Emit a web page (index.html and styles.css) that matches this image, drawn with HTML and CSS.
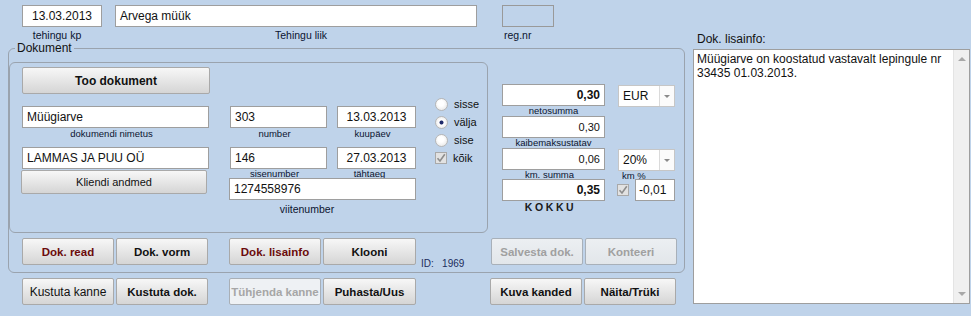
FILE: index.html
```html
<!DOCTYPE html>
<html lang="et">

<head>
    <meta charset="UTF-8">
    <meta name="viewport" content="width=device-width, initial-scale=1.0">
    <title>Dokument</title>
    <link rel="stylesheet" href="styles.css">
</head>

<body>
    <div class="screen">
        <div class="main">
            <div class="top-row">
                <div class="field w-date">
                    <div class="input center">13.03.2013</div>
                    <div class="cap cap-top pr10">tehingu kp</div>
                </div>
                <div class="field w-type">
                    <div class="input">Arvega müük</div>
                    <div class="cap cap-top pl10">Tehingu liik</div>
                </div>
                <div class="field w-reg">
                    <div class="input blank"></div>
                    <div class="cap cap-top left">reg.nr</div>
                </div>
            </div>

            <fieldset class="doc">
                <legend>Dokument</legend>
                <div class="doc-body">
                    <div class="panel">
                        <button class="btn btn-fetch">Too dokument</button>
                        <div class="fields">
                            <div class="col-name">
                                <div class="input">Müügiarve</div>
                                <div class="cap gap">dokumendi nimetus</div>
                                <div class="input">LAMMAS JA PUU OÜ</div>
                                <button class="btn btn-client">Kliendi andmed</button>
                            </div>
                            <div class="col-nums">
                                <div class="pair">
                                    <div class="field w-nr">
                                        <div class="input">303</div>
                                        <div class="cap gap">number</div>
                                    </div>
                                    <div class="field w-dt">
                                        <div class="input center">13.03.2013</div>
                                        <div class="cap gap">kuupäev</div>
                                    </div>
                                </div>
                                <div class="pair">
                                    <div class="field w-nr">
                                        <div class="input">146</div>
                                        <div class="cap tight">sisenumber</div>
                                    </div>
                                    <div class="field w-dt">
                                        <div class="input center">27.03.2013</div>
                                        <div class="cap tight pr14">tähtaeg</div>
                                    </div>
                                </div>
                                <div class="input ref">1274558976</div>
                                <div class="cap ref-cap">viitenumber</div>
                            </div>
                            <div class="radios">
                                <div class="opt"><span class="dot"></span>sisse</div>
                                <div class="opt"><span class="dot on"></span>välja</div>
                                <div class="opt"><span class="dot"></span>sise</div>
                                <div class="opt">
                                    <span class="check"><svg width="10" height="10" viewBox="0 0 10 10"><path d="M1.5 5.2 L4 8 L8.8 1.2" fill="none" stroke="#8d8d8d" stroke-width="1.6"/></svg></span>kõik
                                </div>
                            </div>
                        </div>
                    </div>

                    <div class="sums">
                        <div class="sum-col">
                            <div class="input num bold">0,30</div>
                            <div class="cap sm">netosumma</div>
                            <div class="input num small">0,30</div>
                            <div class="cap sm">kaibemaksustatav</div>
                            <div class="input num small">0,06</div>
                            <div class="cap tight">km. summa</div>
                            <div class="input num bold">0,35</div>
                            <div class="cap total">KOKKU</div>
                        </div>
                        <div class="rate-col">
                            <div class="combo first">
                                <span class="combo-val">EUR</span>
                                <span class="combo-btn"><i class="tri"></i></span>
                            </div>
                            <div class="combo second">
                                <span class="combo-val">20%</span>
                                <span class="combo-btn"><i class="tri"></i></span>
                            </div>
                            <div class="cap tight left km">km %</div>
                            <div class="round-row">
                                <span class="check"><svg width="10" height="10" viewBox="0 0 10 10"><path d="M1.5 5.2 L4 8 L8.8 1.2" fill="none" stroke="#8d8d8d" stroke-width="1.6"/></svg></span>
                                <div class="input diff">-0,01</div>
                            </div>
                        </div>
                    </div>
                </div>

                <div class="btn-row inner-row">
                    <button class="btn red">Dok. read</button>
                    <button class="btn">Dok. vorm</button>
                    <button class="btn red push">Dok. lisainfo</button>
                    <button class="btn wide">Klooni</button>
                    <div class="doc-id">ID:&nbsp;&nbsp; 1969</div>
                    <button class="btn off right">Salvesta dok.</button>
                    <button class="btn off">Konteeri</button>
                </div>
            </fieldset>

            <div class="btn-row outer-row">
                <button class="btn plain">Kustuta kanne</button>
                <button class="btn">Kustuta dok.</button>
                <button class="btn faded push">Tühjenda kanne</button>
                <button class="btn wide">Puhasta/Uus</button>
                <button class="btn far">Kuva kanded</button>
                <button class="btn">Näita/Trüki</button>
            </div>
        </div>

        <div class="side">
            <div class="side-label">Dok. lisainfo:</div>
            <div class="memo">
                <div class="memo-text">Müügiarve on koostatud vastavalt lepingule nr<br>33435 01.03.2013.</div>
                <div class="memo-bar">
                    <i class="arrow up"></i>
                    <i class="arrow down"></i>
                </div>
            </div>
        </div>
    </div>
</body>

</html>
```

FILE: styles.css
```css
* {
    box-sizing: border-box;
}

body {
    margin: 0;
    background-color: #bfd3ea;
    font-family: "Liberation Sans", Arial, sans-serif;
    color: #111;
    overflow: hidden;
}

.screen {
    display: flex;
    gap: 8px;
    width: 971px;
    height: 316px;
}

.main {
    width: 685px;
    flex: none;
}

/* top line: date, type, reg.nr */
.top-row {
    display: flex;
    height: 41px;
    padding: 5px 0 0 22px;
}

.field {
    display: flex;
    flex-direction: column;
}

.w-date {
    width: 80px;
}

.w-type {
    width: 362px;
    margin-left: 13px;
}

.w-reg {
    width: 52px;
    margin-left: 25px;
}

.input {
    height: 22px;
    border: 1px solid #9e9e9e;
    background-color: #fff;
    font-size: 12px;
    line-height: 20px;
    padding: 0 4px;
    white-space: nowrap;
    overflow: hidden;
}

.input.center {
    text-align: center;
}

.input.blank {
    background-color: transparent;
    border-color: #999;
}

.input.num {
    text-align: right;
    padding-right: 4px;
}

.input.bold {
    font-weight: bold;
}

.input.small {
    font-size: 11px;
}

.cap {
    font-size: 9.5px;
    line-height: 12px;
    text-align: center;
    color: #0b1430;
    white-space: nowrap;
    padding-right: 8px;
}

.cap-top {
    font-size: 10.5px;
    margin-top: 2px;
    padding-right: 0;
}

.cap.left {
    text-align: left;
    padding: 0 0 0 2px;
}

.cap.pr10 {
    padding-right: 10px;
}

.cap.pl10 {
    padding-left: 10px;
}

.cap.pr14 {
    padding-right: 14px;
}

.cap.gap {
    margin-bottom: 7px;
}

.cap.tight {
    line-height: 9px;
    height: 9px;
}

/* Dokument group */
.doc {
    margin: 0 0 0 8px;
    width: 677px;
    min-width: 0;
    padding: 0 0 7px;
    border: 1px solid #9aa3ae;
    border-radius: 6px;
}

.doc legend {
    margin-left: 6px;
    padding: 0 2px;
    font-size: 12px;
    line-height: 14px;
    color: #111;
}

.doc-body {
    display: flex;
    align-items: flex-start;
    margin-top: 7px;
}

.panel {
    width: 479px;
    height: 171px;
    flex: none;
    border: 1px solid #9aa3ae;
    border-radius: 6px;
    padding: 4px 0 0 12px;
}

.btn {
    height: 27px;
    width: 92px;
    padding: 0;
    border: 1px solid #a9a9a9;
    border-radius: 2px;
    background: linear-gradient(#f7f7f7, #d5d5d5);
    font-family: inherit;
    font-size: 11.5px;
    font-weight: bold;
    color: #111;
    white-space: nowrap;
    cursor: pointer;
}

.btn-fetch {
    width: 188px;
    display: block;
    font-size: 12px;
}

.fields {
    display: flex;
    margin-top: 1px;
}

.col-name {
    width: 187px;
    margin-top: 11px;
    display: flex;
    flex-direction: column;
}

.btn-client {
    width: 186px;
    height: 24px;
    margin: 1px 0 0 -1px;
    font-size: 11px;
    font-weight: normal;
}

.col-nums {
    width: 186px;
    margin: 11px 0 0 21px;
    display: flex;
    flex-direction: column;
}

.pair {
    display: flex;
    gap: 10px;
}

.w-nr {
    width: 97px;
}

.w-dt {
    width: 79px;
}

.input.ref {
    width: 187px;
    margin-left: -1px;
}

.ref-cap {
    margin-top: 3px;
    font-size: 10.5px;
    padding-right: 32px;
}

/* sisse / välja / sise / kõik */
.radios {
    margin-left: 17px;
    display: flex;
    flex-direction: column;
}

.opt {
    height: 18px;
    display: flex;
    align-items: center;
    gap: 6px;
    padding-left: 2px;
    font-size: 11px;
}

.dot {
    width: 13px;
    height: 13px;
    border-radius: 50%;
    border: 1px solid #b6b6b6;
    background: radial-gradient(circle at 45% 40%, #fff 30%, #e0e0e0);
}

.dot.on {
    background: radial-gradient(circle, #1f2b6b 0 1.6px, #fff 2.4px, #fff 35%, #e0e0e0);
}

.check {
    width: 12px;
    height: 12px;
    border: 1px solid #a9a9a9;
    background-color: #e2e2e2;
    display: flex;
    align-items: center;
    justify-content: center;
}

/* money fields */
.sums {
    display: flex;
    gap: 12px;
    margin: 22px 0 0 14px;
}

.sum-col {
    width: 103px;
    display: flex;
    flex-direction: column;
}

.cap.sm {
    line-height: 10px;
    padding-right: 0;
}

.cap.total {
    font-size: 10.5px;
    font-weight: bold;
    letter-spacing: 2.6px;
    padding-right: 6px;
    color: #1a1a1a;
}

.rate-col {
    width: 58px;
    display: flex;
    flex-direction: column;
}

.combo {
    display: flex;
    width: 57px;
    height: 22px;
    margin-left: 1px;
    border: 1px solid #c6c6c6;
    background-color: #fff;
}

.combo.first {
    margin-top: 1px;
}

.combo.second {
    margin-top: 42px;
}

.combo-val {
    flex: 1;
    padding-left: 4px;
    font-size: 12px;
    line-height: 20px;
}

.combo-btn {
    width: 15px;
    border-left: 1px solid #dadada;
    background-color: #fbfbfb;
    display: flex;
    align-items: center;
    justify-content: center;
}

.tri {
    width: 0;
    height: 0;
    border-left: 3px solid transparent;
    border-right: 3px solid transparent;
    border-top: 3px solid #8a8a8a;
}

.cap.km {
    padding-left: 5px;
}

.round-row {
    display: flex;
    align-items: center;
    gap: 6px;
    margin-top: -1px;
}

.input.diff {
    width: 40px;
    padding-left: 3px;
}

/* button rows */
.btn-row {
    display: flex;
    gap: 2px;
}

.inner-row {
    margin: 5px 7px 0 13px;
}

.outer-row {
    margin-top: 5px;
    padding-left: 22px;
}

.btn.red {
    color: #6b0b0b;
}

.btn.push {
    margin-left: 19px;
}

.btn.wide {
    width: 93px;
}

.btn.right {
    margin-left: auto;
}

.btn.far {
    margin-left: 72px;
}

.btn.plain {
    font-size: 12px;
    font-weight: normal;
}

.btn.off {
    background: linear-gradient(#eceff2, #e2e6ea);
    border-color: #a8b0b9;
    color: #a0a0a0;
}

.btn.faded {
    background: #eef1f4;
    border-color: #a9afb6;
    color: #a6a6a6;
}

.doc-id {
    align-self: flex-end;
    margin: 0 0 -5px 3px;
    font-size: 10px;
    line-height: 12px;
    color: #1c2c5c;
    white-space: nowrap;
}

/* Dok. lisainfo */
.side {
    width: 277px;
    padding-top: 32px;
}

.side-label {
    padding-left: 4px;
    font-size: 12px;
    line-height: 14px;
    color: #111;
}

.memo {
    display: flex;
    margin-top: 3px;
    width: 277px;
    height: 255px;
    border: 1px solid #9e9e9e;
    background-color: #fff;
}

.memo-text {
    flex: 1;
    padding: 2px 3px;
    font-size: 12px;
    line-height: 14px;
    white-space: nowrap;
}

.memo-bar {
    width: 16px;
    background-color: #f0f0f0;
    border-left: 1px solid #e4e4e4;
    display: flex;
    flex-direction: column;
    justify-content: space-between;
    align-items: center;
    padding: 7px 0;
}

.arrow {
    width: 0;
    height: 0;
    border-left: 4px solid transparent;
    border-right: 4px solid transparent;
}

.arrow.up {
    border-bottom: 4px solid #a8a8a8;
}

.arrow.down {
    border-top: 4px solid #a8a8a8;
}
```
